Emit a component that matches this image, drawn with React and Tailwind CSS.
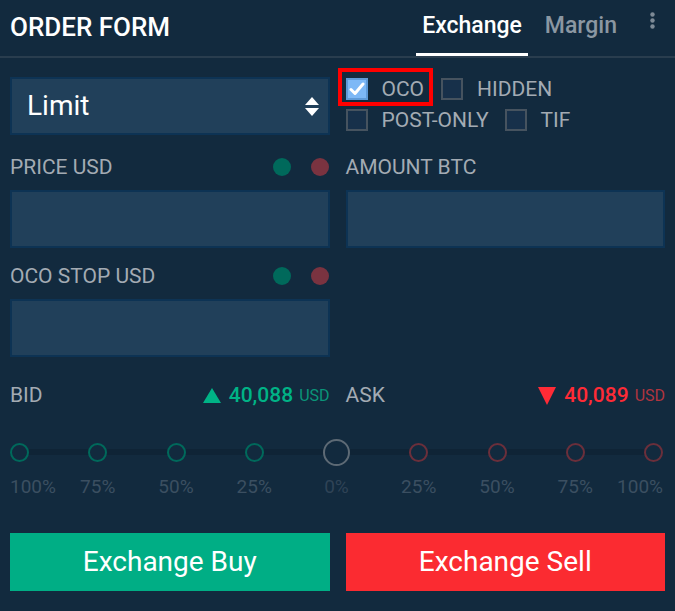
import React from "react";

const FONT = { fontFamily: "Roboto, 'Liberation Sans', sans-serif" };

const Check = ({ checked, label, highlight }) => (
  <div className="relative flex items-center h-[22px]">
    {checked ? (
      <span className="w-[22px] h-[22px] bg-[#7db8f6] border-2 border-[#5e9ad8] flex items-center justify-center">
        <svg width="16" height="14" viewBox="0 0 16 14">
          <path d="M2 7.5 L6 11.5 L14 2" fill="none" stroke="#fff" strokeWidth="3" strokeLinecap="round" strokeLinejoin="round" />
        </svg>
      </span>
    ) : (
      <span className="w-[22px] h-[22px] border-2 border-[#46535f] bg-[#17304a]" />
    )}
    <span className="ml-[14px] text-[21px] leading-[22px] text-[#a3abb3]">{label}</span>
    {highlight && (
      <span className="absolute -left-[8px] -right-[9px] -top-[10px] -bottom-[6px] border-4 border-[#ff0000]" />
    )}
  </div>
);

const Field = ({ label, dots }) => (
  <div>
    <div className="flex items-center h-[24px]">
      <span className="text-[21px] leading-[24px] text-[#a3abb3]">{label}</span>
      {dots && (
        <div className="ml-auto flex items-center gap-[20px] mr-[1px]">
          <span className="w-[18px] h-[18px] rounded-full bg-[#00695b]" />
          <span className="w-[18px] h-[18px] rounded-full bg-[#7a3340]" />
        </div>
      )}
    </div>
    <div className="mt-[11px] h-[58px] bg-[#21405a] border-2 border-[#0d3354]" />
  </div>
);

const steps = [
  { l: "100%", c: "border-[#00695b]" },
  { l: "75%", c: "border-[#00695b]" },
  { l: "50%", c: "border-[#00695b]" },
  { l: "25%", c: "border-[#00695b]" },
  { l: "0%", c: "border-[#5d6a75]", big: true },
  { l: "25%", c: "border-[#6b2f3b]" },
  { l: "50%", c: "border-[#6b2f3b]" },
  { l: "75%", c: "border-[#6b2f3b]" },
  { l: "100%", c: "border-[#6b2f3b]" },
];

export default function App() {
  return (
    <div className="w-[675px] h-[611px] bg-[#122a3e] overflow-hidden" style={FONT}>
      {/* header */}
      <div className="h-[58px] flex items-stretch border-b-2 border-[#293d4e]">
        <div className="flex items-center pl-[10px] pb-[2px] text-[26px] font-medium text-white">ORDER FORM</div>
        <div className="ml-auto flex items-stretch">
          <div className="flex items-center px-[6px] border-b-[3px] border-white text-[23px] font-medium text-white">
            Exchange
          </div>
          <div className="flex items-center ml-[11px] px-[6px] border-b-[3px] border-transparent text-[23px] font-medium text-[#8b97a2]">
            Margin
          </div>
          <div className="ml-[27px] mr-[20px] mt-[12px]">
            <svg width="5" height="17" viewBox="0 0 5 17">
              <circle cx="2.5" cy="2.5" r="2.2" fill="#7d8a96" />
              <circle cx="2.5" cy="8.5" r="2.2" fill="#7d8a96" />
              <circle cx="2.5" cy="14.5" r="2.2" fill="#7d8a96" />
            </svg>
          </div>
        </div>
      </div>

      <div className="px-[10px]">
        {/* type + options */}
        <div className="mt-[19px] grid grid-cols-2 gap-x-[16px]">
          <div className="h-[58px] bg-[#21405a] border-2 border-[#0d3354] flex items-center pl-[15px] pr-[9px]">
            <span className="text-[28px] text-white">Limit</span>
            <svg className="ml-auto" width="14" height="19" viewBox="0 0 14 19">
              <path d="M7 0 L14 8 L0 8 Z" fill="#fff" />
              <path d="M0 11 L14 11 L7 19 Z" fill="#fff" />
            </svg>
          </div>
          <div className="pt-[1px] flex flex-col gap-[9px]">
            <div className="flex items-center gap-[17px]">
              <Check checked label="OCO" highlight />
              <Check label="HIDDEN" />
            </div>
            <div className="flex items-center gap-[16px]">
              <Check label="POST-ONLY" />
              <Check label="TIF" />
            </div>
          </div>
        </div>

        <div className="mt-[20px] grid grid-cols-2 gap-x-[16px]">
          <Field label="PRICE USD" dots />
          <Field label="AMOUNT BTC" />
        </div>

        <div className="mt-[16px] grid grid-cols-2 gap-x-[16px]">
          <Field label="OCO STOP USD" dots />
        </div>

        {/* bid / ask */}
        <div className="mt-[23px] grid grid-cols-2 gap-x-[16px] h-[24px]">
          <div className="flex items-center">
            <span className="text-[21px] text-[#a3abb3]">BID</span>
            <div className="ml-auto flex items-center">
              <svg width="18" height="15" viewBox="0 0 18 15">
                <path d="M9 0 L18 15 L0 15 Z" fill="#00b386" />
              </svg>
              <span className="ml-[8px] text-[21px] font-medium text-[#00b386]">40,088</span>
              <span className="ml-[6px] text-[16px] text-[#0a9579]">USD</span>
            </div>
          </div>
          <div className="flex items-center">
            <span className="text-[21px] text-[#a3abb3]">ASK</span>
            <div className="ml-auto flex items-center">
              <svg width="18" height="18" viewBox="0 0 18 18">
                <path d="M0 0 L18 0 L9 18 Z" fill="#ff2b36" />
              </svg>
              <span className="ml-[8px] text-[21px] font-medium text-[#ff2b36]">40,089</span>
              <span className="ml-[6px] text-[16px] text-[#b0353f]">USD</span>
            </div>
          </div>
        </div>

        {/* amount slider */}
        <div className="relative mt-[35px] mr-[2px]">
          <div className="absolute left-0 right-0 top-[10px] h-[6px] bg-[#0f2436]" />
          <div className="relative flex justify-between">
            {steps.map((s, i) => (
              <div
                key={i}
                className={
                  "flex flex-col " +
                  (s.big ? "w-[27px] " : "w-[19px] ") +
                  (i === 0 ? "items-start" : i === steps.length - 1 ? "items-end" : "items-center")
                }
              >
                <div className="h-[27px] flex items-center">
                  <span
                    className={
                      "block rounded-full border-2 bg-[#122a3e] " +
                      s.c +
                      (s.big ? " w-[27px] h-[27px]" : " w-[19px] h-[19px]")
                    }
                  />
                </div>
                <span
                  className={
                    "mt-[9px] h-[24px] leading-[24px] text-[19px] whitespace-nowrap " +
                    (s.big ? "text-[#2f4356]" : "text-[#3b4f61]")
                  }
                >
                  {s.l}
                </span>
              </div>
            ))}
          </div>
        </div>

        {/* actions */}
        <div className="mt-[34px] grid grid-cols-2 gap-x-[16px]">
          <button className="h-[58px] bg-[#00ae85] text-white text-[28px]">Exchange Buy</button>
          <button className="h-[58px] bg-[#fb2b31] text-white text-[28px]">Exchange Sell</button>
        </div>
      </div>
    </div>
  );
}
